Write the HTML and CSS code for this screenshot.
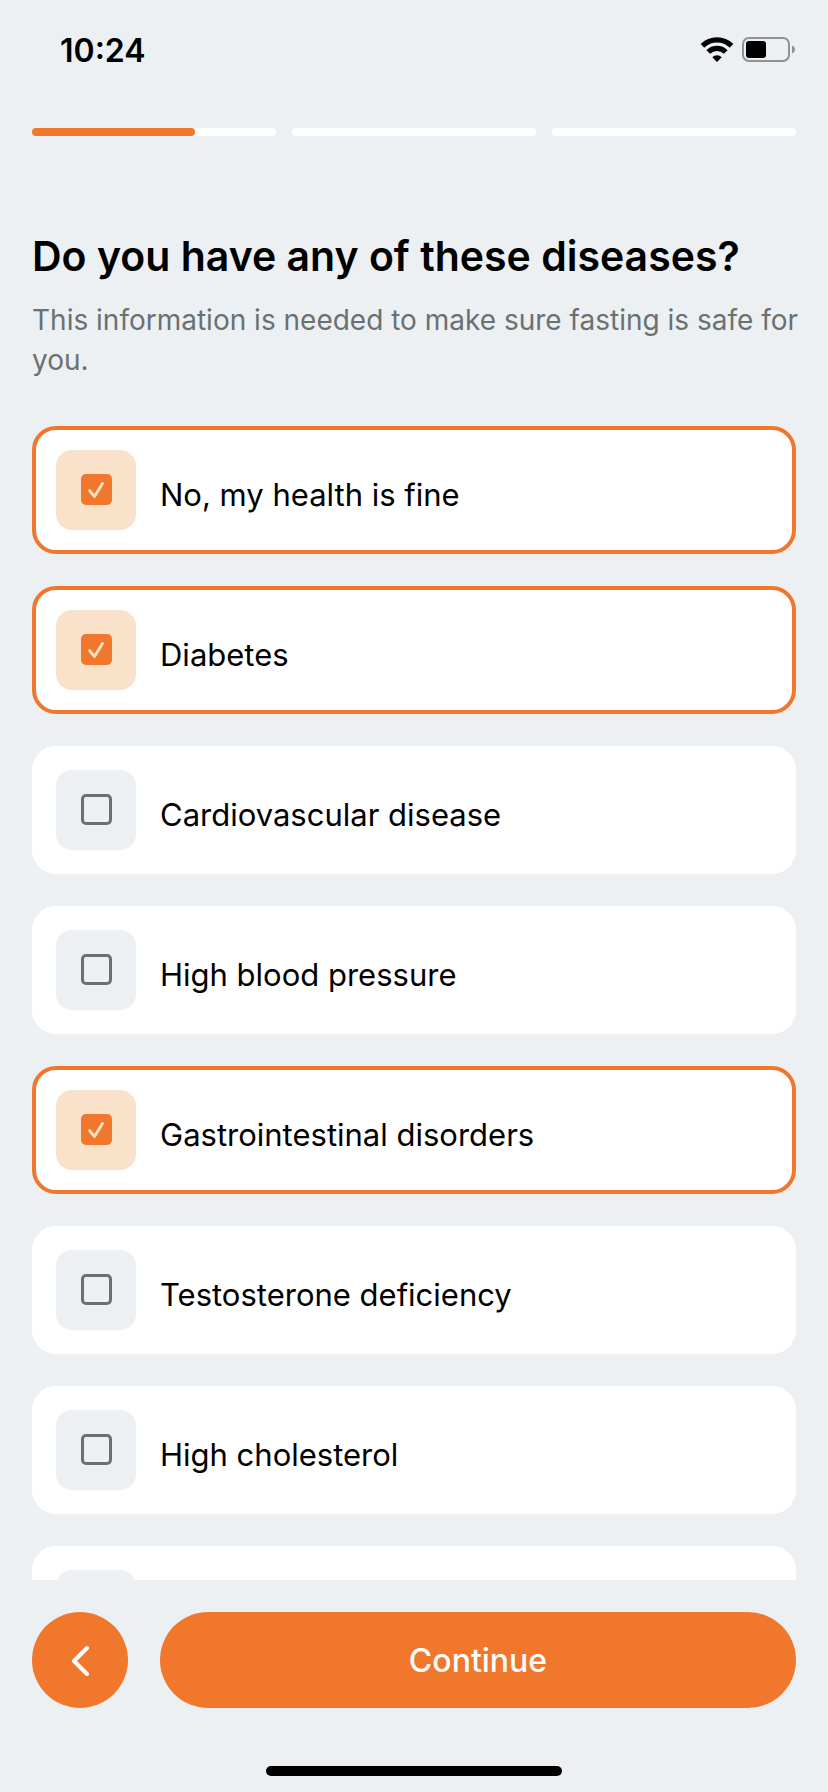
FILE: index.html
```html
<!DOCTYPE html>
<html lang="en">
<head>
    <meta charset="UTF-8">
    <meta name="viewport" content="width=device-width, initial-scale=1.0">
    <title>Do you have any of these diseases?</title>
    <link rel="stylesheet" href="styles.css">
</head>
<body>

    <!-- Status bar -->
    <header class="status-bar">
        <span class="status-time">10:24</span>
        <div class="status-icons">
            <svg width="34" height="26" viewBox="0 0 34 26" aria-hidden="true">
                <path d="M2.500 8.900a20.600 20.600 0 0 1 29 0" fill="none" stroke="#000" stroke-width="5.200"/>
                <path d="M8.300 15a12.200 12.200 0 0 1 17.400 0" fill="none" stroke="#000" stroke-width="5.200"/>
                <path d="M12.300 20.300a6.600 6.600 0 0 1 9.400 0L17 25z" fill="#000"/>
            </svg>
            <svg width="53" height="26" viewBox="0 0 53 26" aria-hidden="true">
                <rect x="1" y="1" width="46" height="23" rx="6" fill="none" stroke="#8f9193" stroke-width="2"/>
                <rect x="4" y="4" width="20" height="17" rx="3" fill="#000"/>
                <path d="M50 8.500c4 1.600 4 6.400 0 8z" fill="#8f9193"/>
            </svg>
        </div>
    </header>

    <!-- Steps -->
    <div class="progress">
        <div class="progress-step"><div class="progress-fill"></div></div>
        <div class="progress-step"></div>
        <div class="progress-step"></div>
    </div>

    <main class="content">
        <h1>Do you have any of these diseases?</h1>
        <p class="subtitle">This information is needed to make sure fasting is safe for you.</p>

        <div class="options">
            <label class="option">
                <span class="tile">
                    <input type="checkbox" checked>
                    <svg class="tick" viewBox="0 0 31 31"><path d="M8.500 16.500l5 6L21.500 9.500"/></svg>
                </span>
                <span class="option-text">No, my health is fine</span>
            </label>
            <label class="option">
                <span class="tile">
                    <input type="checkbox" checked>
                    <svg class="tick" viewBox="0 0 31 31"><path d="M8.500 16.500l5 6L21.500 9.500"/></svg>
                </span>
                <span class="option-text">Diabetes</span>
            </label>
            <label class="option">
                <span class="tile">
                    <input type="checkbox">
                    <svg class="tick" viewBox="0 0 31 31"><path d="M8.500 16.500l5 6L21.500 9.500"/></svg>
                </span>
                <span class="option-text">Cardiovascular disease</span>
            </label>
            <label class="option">
                <span class="tile">
                    <input type="checkbox">
                    <svg class="tick" viewBox="0 0 31 31"><path d="M8.500 16.500l5 6L21.500 9.500"/></svg>
                </span>
                <span class="option-text">High blood pressure</span>
            </label>
            <label class="option">
                <span class="tile">
                    <input type="checkbox" checked>
                    <svg class="tick" viewBox="0 0 31 31"><path d="M8.500 16.500l5 6L21.500 9.500"/></svg>
                </span>
                <span class="option-text">Gastrointestinal disorders</span>
            </label>
            <label class="option">
                <span class="tile">
                    <input type="checkbox">
                    <svg class="tick" viewBox="0 0 31 31"><path d="M8.500 16.500l5 6L21.500 9.500"/></svg>
                </span>
                <span class="option-text">Testosterone deficiency</span>
            </label>
            <label class="option">
                <span class="tile">
                    <input type="checkbox">
                    <svg class="tick" viewBox="0 0 31 31"><path d="M8.500 16.500l5 6L21.500 9.500"/></svg>
                </span>
                <span class="option-text">High cholesterol</span>
            </label>
            <label class="option">
                <span class="tile">
                    <input type="checkbox" aria-label="Other">
                    <svg class="tick" viewBox="0 0 31 31"><path d="M8.500 16.500l5 6L21.500 9.500"/></svg>
                </span>
            </label>
        </div>
    </main>

    <!-- Bottom buttons -->
    <footer class="footer">
        <div class="actions">
            <button class="back-btn" type="button" aria-label="Back">
                <svg width="32" height="32" viewBox="0 0 32 32"><path d="M23 4L10 17L23 30"/></svg>
            </button>
            <button class="continue-btn" type="button">Continue</button>
        </div>
        <div class="home-indicator"></div>
    </footer>

</body>
</html>
```
FILE: styles.css
```css
* {
    box-sizing: border-box;
}

body {
    margin: 0;
    height: 100vh;
    display: flex;
    flex-direction: column;
    font-family: Inter, "Liberation Sans", sans-serif;
    background-color: #ecf0f3;
    color: #000;
    overflow: hidden;
}

/* Status bar */
.status-bar {
    display: flex;
    justify-content: space-between;
    align-items: center;
    height: 100px;
    padding: 0 33px 0 60px;
}

.status-time {
    font-size: 32px;
    font-weight: 600;
}

.status-icons {
    display: flex;
    gap: 8px;
}

/* Steps at the top */
.progress {
    display: flex;
    gap: 16px;
    padding: 28px 32px 0;
}

.progress-step {
    flex: 1;
    height: 8px;
    border-radius: 4px;
    background-color: #fff;
}

.progress-fill {
    width: 67%;
    height: 100%;
    border-radius: 4px;
    background-color: #f0772b;
}

/* Question and answers */
.content {
    flex: 1;
    min-height: 0;
    display: flex;
    flex-direction: column;
    padding: 94px 32px 0;
}

h1 {
    margin: 0;
    font-size: 41px;
    font-weight: 600;
    line-height: 52px;
}

.subtitle {
    margin: 18px -12px 46px 0;
    font-size: 28px;
    line-height: 40px;
    color: #6b7072;
}

/* The last card runs under the footer */
.options {
    flex: 1;
    min-height: 0;
    display: flex;
    flex-direction: column;
    gap: 32px;
    overflow: hidden;
}

.option {
    flex: none;
    display: flex;
    align-items: center;
    gap: 24px;
    padding: 20px;
    border: 4px solid #fff;
    border-radius: 24px;
    background-color: #fff;
    cursor: pointer;
}

.option:has(input:checked) {
    border-color: #f0772b;
}

.option-text {
    padding-top: 10px;
    font-size: 31px;
    line-height: 40px;
}

.tile {
    display: grid;
    place-items: center;
    width: 80px;
    height: 80px;
    padding-bottom: 1px;
    border-radius: 16px;
    background-color: #ecf0f3;
}

.option:has(input:checked) .tile {
    background-color: #fae2ca;
}

.tile input,
.tick {
    grid-area: 1 / 1;
    width: 31px;
    height: 31px;
}

.tile input {
    appearance: none;
    margin: 0;
    border: 3px solid #6b7072;
    border-radius: 5px;
}

.tile input:checked {
    border-color: #f0772b;
    background-color: #f0772b;
}

.tick {
    visibility: hidden;
    fill: none;
    stroke: #fae2ca;
    stroke-width: 2.8;
    stroke-linecap: round;
    stroke-linejoin: round;
    pointer-events: none;
}

input:checked + .tick {
    visibility: visible;
}

/* Bottom buttons */
.footer {
    padding: 32px 32px 16px;
}

.actions {
    display: flex;
    gap: 32px;
}

button {
    height: 96px;
    padding: 0;
    border: none;
    border-radius: 48px;
    background-color: #f0772b;
    color: #fff;
    font-family: inherit;
    font-size: 32px;
    font-weight: 500;
    cursor: pointer;
}

.back-btn {
    display: grid;
    place-items: center;
    width: 96px;
}

.back-btn path {
    fill: none;
    stroke: #fff;
    stroke-width: 4;
    stroke-linecap: round;
    stroke-linejoin: round;
}

.continue-btn {
    flex: 1;
}

.home-indicator {
    width: 296px;
    height: 10px;
    margin: 58px auto 0;
    border-radius: 5px;
    background-color: #000;
}
```
